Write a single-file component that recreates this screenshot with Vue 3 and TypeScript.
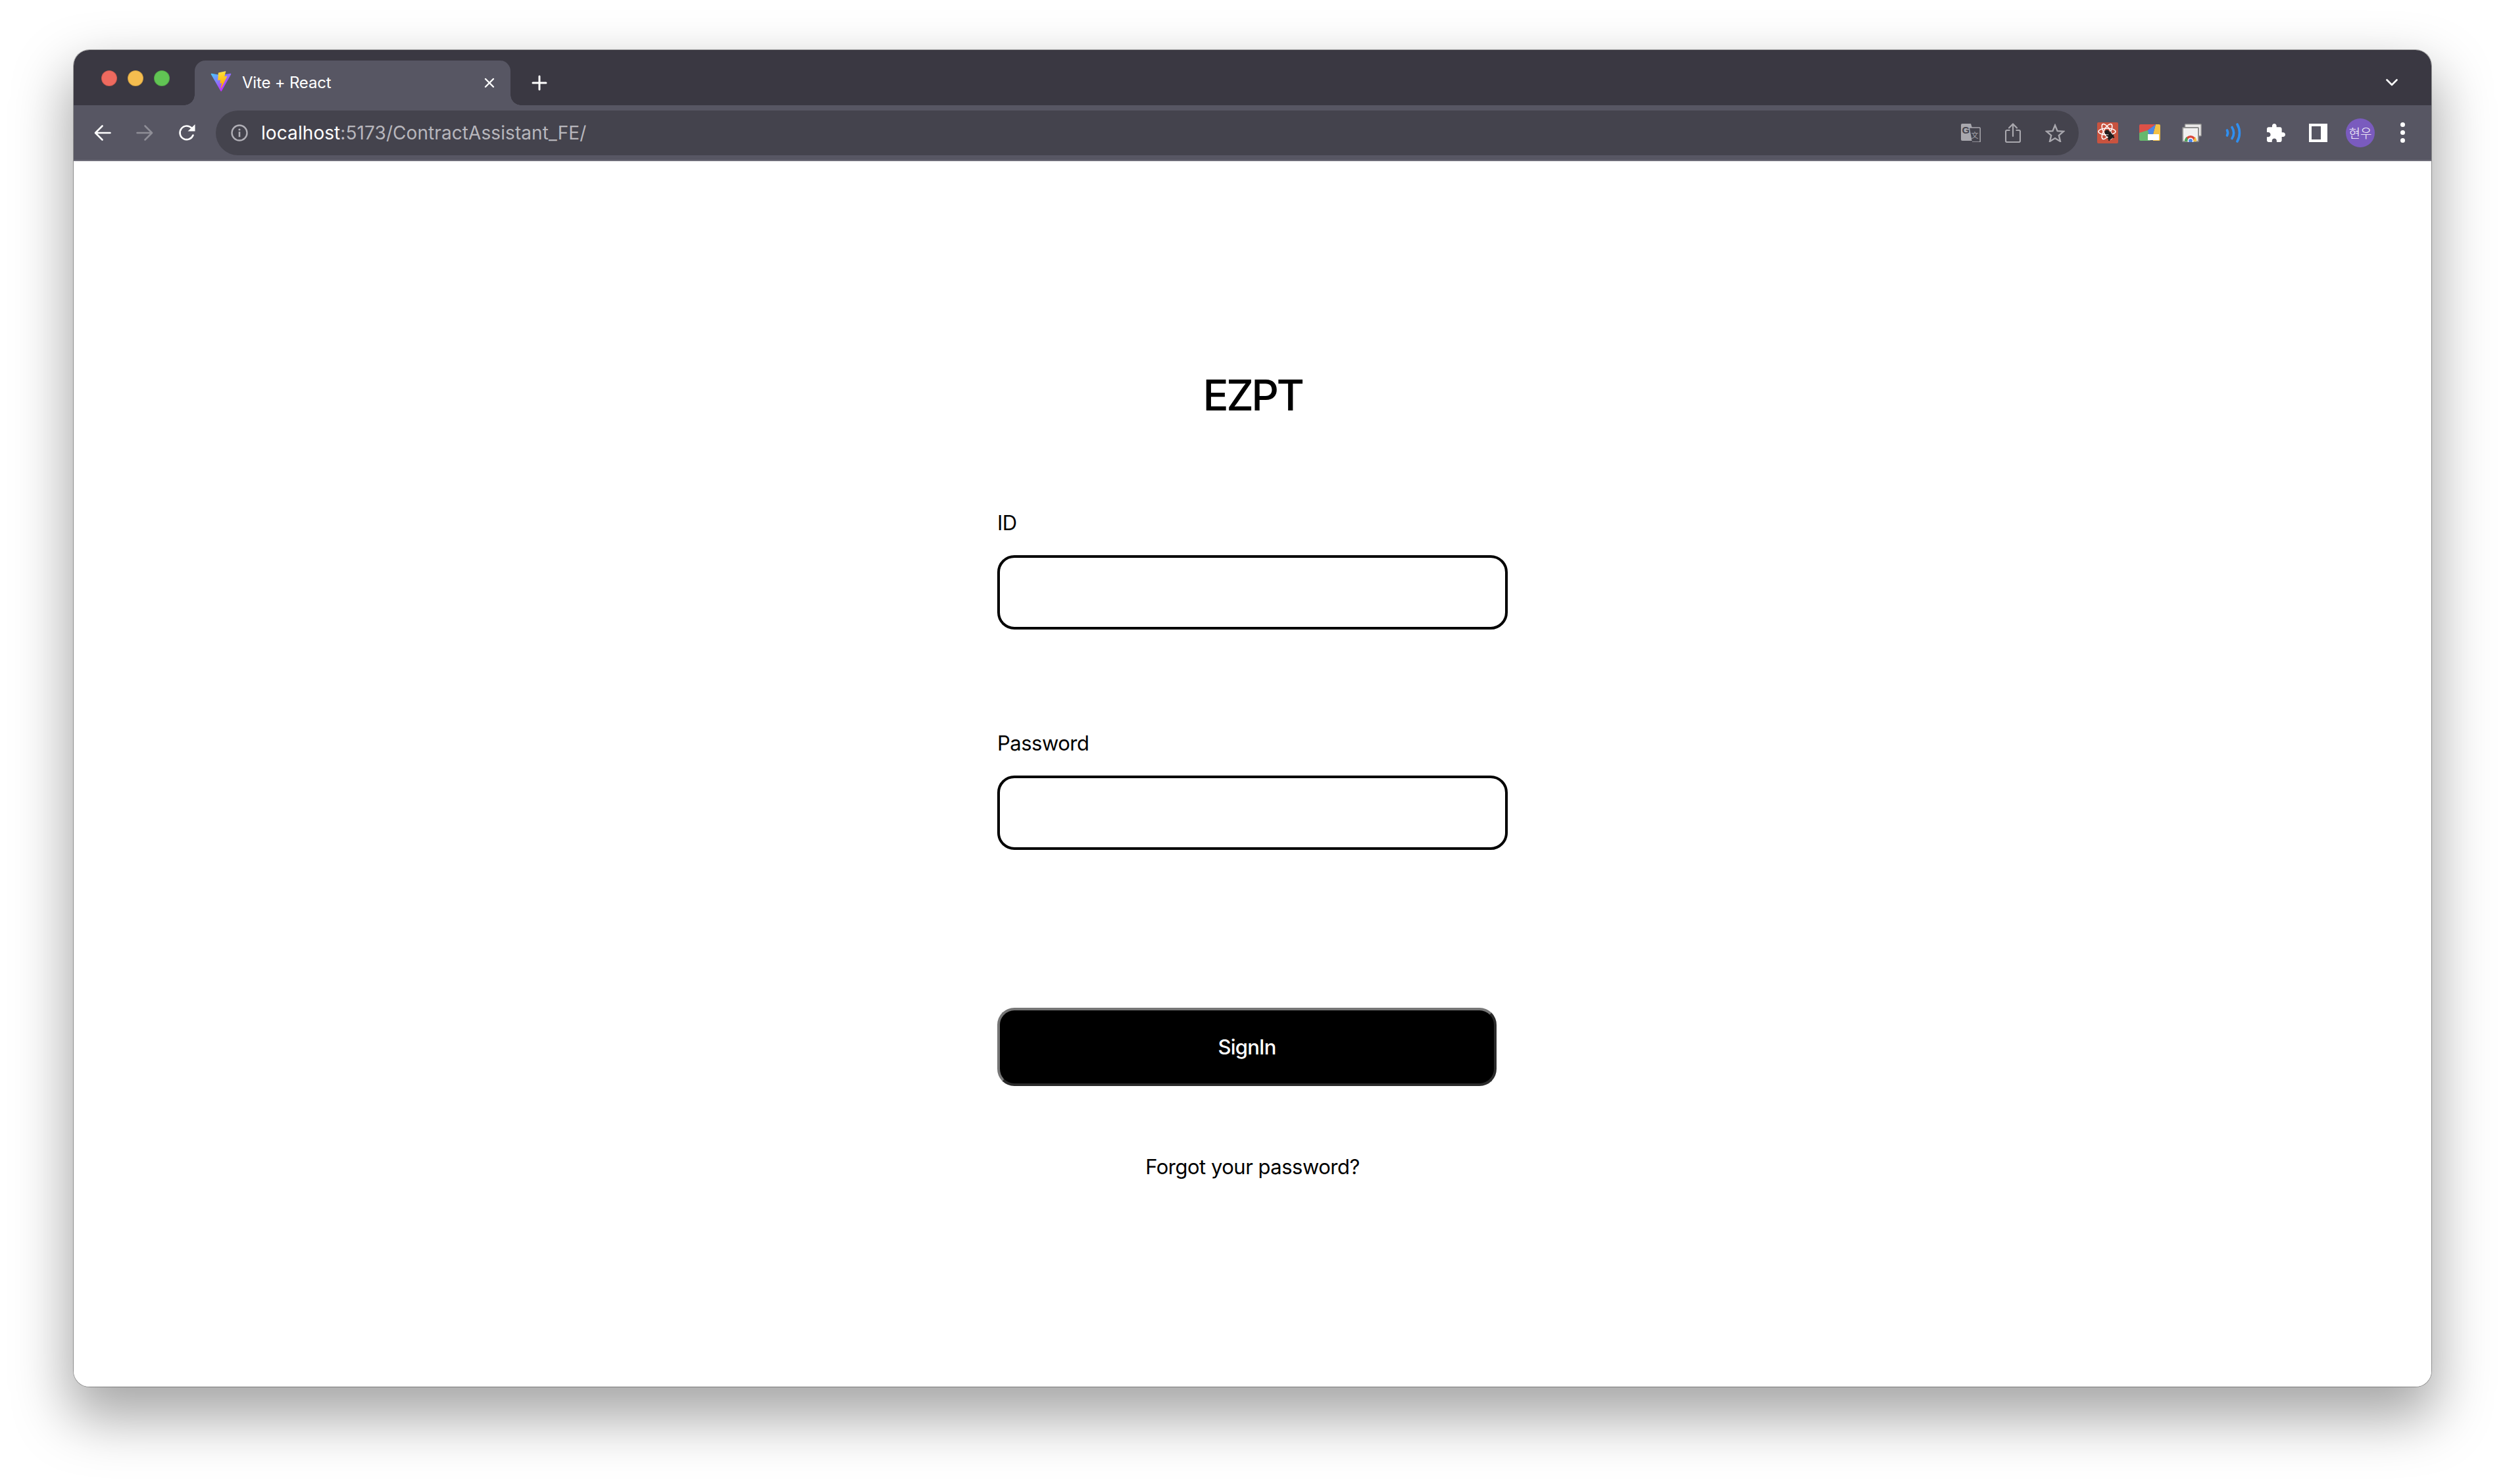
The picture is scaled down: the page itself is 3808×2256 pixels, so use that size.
<template>
  <div class="desktop">
    <div class="browser">
      <div class="tab-strip">
        <div class="lights">
          <span class="light red"></span>
          <span class="light yellow"></span>
          <span class="light green"></span>
        </div>
        <div class="tab">
          <svg class="favicon" viewBox="0 0 410 404">
            <defs>
              <linearGradient id="viteA" x1="6" y1="33" x2="235" y2="344" gradientUnits="userSpaceOnUse">
                <stop offset="0" stop-color="#41D1FF" />
                <stop offset="1" stop-color="#BD34FE" />
              </linearGradient>
              <linearGradient id="viteB" x1="194" y1="8" x2="236" y2="292" gradientUnits="userSpaceOnUse">
                <stop offset="0" stop-color="#FFEA83" />
                <stop offset="0.08" stop-color="#FFDD35" />
                <stop offset="1" stop-color="#FFA800" />
              </linearGradient>
            </defs>
            <path fill="url(#viteA)" d="M399.641 59.5246L215.643 388.545C211.844 395.338 202.084 395.378 198.228 388.618L10.5817 59.5563C6.38087 52.1896 12.6802 43.2665 21.0281 44.7586L205.223 77.6824C206.398 77.8924 207.601 77.8904 208.776 77.6763L389.119 44.8058C397.439 43.2894 403.768 52.1434 399.641 59.5246Z" />
            <path fill="url(#viteB)" d="M292.965 1.5744L156.801 28.2552C154.563 28.6937 152.906 30.5903 152.771 32.8664L144.395 174.33C144.198 177.662 147.258 180.248 150.51 179.498L188.42 170.749C191.967 169.931 195.172 173.055 194.443 176.622L183.18 231.775C182.422 235.487 185.907 238.661 189.532 237.56L212.947 230.446C216.577 229.344 220.065 232.527 219.297 236.242L201.398 322.875C200.278 328.294 207.486 331.249 210.492 326.603L212.5 323.5L323.454 102.072C325.312 98.3645 322.108 94.137 318.036 94.9228L279.014 102.454C275.347 103.161 272.227 99.746 273.262 96.1583L298.731 7.86689C299.767 4.27314 296.636 0.855181 292.965 1.5744Z" />
          </svg>
          <span class="tab-title">Vite + React</span>
          <svg class="tab-close" viewBox="0 0 16 16">
            <path d="M2 2l12 12M14 2L2 14" stroke="#fff" stroke-width="2.4" stroke-linecap="round" fill="none" />
          </svg>
        </div>
        <svg class="new-tab" viewBox="0 0 24 24">
          <path d="M12 2v20M2 12h20" stroke="#fff" stroke-width="3" stroke-linecap="round" fill="none" />
        </svg>
        <svg class="tab-list" viewBox="0 0 18 11">
          <path d="M1.5 1.5L9 9l7.5-7.5" stroke="#fff" stroke-width="2.6" stroke-linecap="round" stroke-linejoin="round" fill="none" />
        </svg>
      </div>

      <div class="toolbar">
        <div class="slot">
          <svg class="nav" viewBox="0 0 26 26">
            <path d="M24.5 13H2.5M12.5 2.5L2 13l10.5 10.5" stroke="#fff" stroke-width="2.6" stroke-linecap="round" stroke-linejoin="round" fill="none" />
          </svg>
        </div>
        <div class="slot">
          <svg class="nav" viewBox="0 0 26 26">
            <path d="M1.5 13h22M13.5 2.5L24 13 13.5 23.5" stroke="#8f8e97" stroke-width="2.6" stroke-linecap="round" stroke-linejoin="round" fill="none" />
          </svg>
        </div>
        <div class="slot">
          <svg class="nav" viewBox="0 0 26 26">
            <path d="M22.5 16.5A10.3 10.3 0 1 1 20.3 5.7" stroke="#fff" stroke-width="2.6" stroke-linecap="round" fill="none" />
            <path d="M14.5 10.5h11V0z" fill="#fff" />
          </svg>
        </div>

        <div class="omnibox">
          <svg class="info" viewBox="0 0 26 26">
            <circle cx="13" cy="13" r="11.5" stroke="#b0afb6" stroke-width="2.4" fill="none" />
            <circle cx="13" cy="8" r="1.6" fill="#b0afb6" />
            <rect x="11.7" y="11.2" width="2.6" height="8" fill="#b0afb6" />
          </svg>
          <div class="url"><span class="host">localhost</span>:5173/ContractAssistant_FE/</div>
          <div class="slot">
            <svg class="translate" viewBox="0 0 30 28">
              <path d="M2 0h13l8 26H2a2 2 0 0 1-2-2V2a2 2 0 0 1 2-2z" fill="#a9a8ae" />
              <path d="M13 6h15a1.2 1.2 0 0 1 1.2 1.2v19.600A1.2 1.2 0 0 1 28 28H17" fill="#44434d" stroke="#a9a8ae" stroke-width="1.5" />
              <text x="1.5" y="15" class="translate-g">G</text>
              <text x="15.5" y="22" class="translate-k">文</text>
            </svg>
          </div>
          <div class="slot">
            <svg class="share" viewBox="0 0 24 30">
              <path d="M7.5 11H3a2 2 0 0 0-2 2v14a2 2 0 0 0 2 2h18a2 2 0 0 0 2-2V13a2 2 0 0 0-2-2h-4.5" stroke="#a9a8ae" stroke-width="2.2" fill="none" />
              <path d="M12 20V2M6 7.5L12 1.5l6 6" stroke="#a9a8ae" stroke-width="2.2" stroke-linecap="round" fill="none" />
            </svg>
          </div>
          <div class="slot">
            <svg class="star" viewBox="0 0 30 28">
              <path d="M15 2.5l3.6 8.6 9.3.7-7.1 6.1 2.2 9.1-8-4.9-8 4.9 2.2-9.1-7.1-6.1 9.3-.7z" stroke="#a9a8ae" stroke-width="2.4" stroke-linejoin="miter" fill="none" />
            </svg>
          </div>
        </div>

        <div class="slot">
          <svg class="ext-react" viewBox="0 0 32 32">
            <rect width="32" height="32" rx="2" fill="#c9533f" />
            <g stroke="#fff" stroke-width="1.5" fill="none">
              <ellipse cx="15" cy="14" rx="13" ry="5" />
              <ellipse cx="15" cy="14" rx="13" ry="5" transform="rotate(60 15 14)" />
              <ellipse cx="15" cy="14" rx="13" ry="5" transform="rotate(120 15 14)" />
            </g>
            <circle cx="15" cy="15" r="3.5" fill="#1d1d1d" />
            <g stroke="#1d1d1d" stroke-width="2" fill="none">
              <path d="M20 14l-2 14M14 20l12 3M16 25l9-6M16 15l9 7" />
            </g>
            <ellipse cx="20" cy="21" rx="3.5" ry="5" fill="#1d1d1d" />
          </svg>
        </div>
        <div class="slot">
          <svg class="ext-color" viewBox="0 0 32 25">
            <path d="M2 0h23L13 9 0 15V2a2 2 0 0 1 2-2z" fill="#dd5147" />
            <path d="M25 0h5a2 2 0 0 1 2 2v13H21z" fill="#f4c145" />
            <path d="M13 9l12-9-4 15H13z" fill="#4e88e6" />
            <path d="M0 13l13-4 4 16H2a2 2 0 0 1-2-2z" fill="#66b86e" />
            <path d="M21 15h11v8a2 2 0 0 1-2 2h-9z" fill="#f4c145" />
            <rect x="13" y="15" width="17" height="9" fill="#fff" />
          </svg>
        </div>
        <div class="slot">
          <svg class="ext-chrome" viewBox="0 0 30 28">
            <rect x="4.5" y="0.8" width="24.7" height="18" rx="1" fill="#eceaea" stroke="#8e8e8e" stroke-width="1.5" />
            <rect x="1" y="6" width="24" height="21" rx="1" fill="#f1f0f0" stroke="#8e8e8e" stroke-width="2" />
            <path d="M4 27a9 9 0 0 1 18 0z" fill="#d9473a" />
            <path d="M4 27a9 9 0 0 1 3-7l3 7z" fill="#4aa35a" />
            <path d="M17 27l3-7a9 9 0 0 1 2 7z" fill="#f2c23f" />
            <circle cx="13" cy="26" r="4.5" fill="#fff" />
            <circle cx="13" cy="26" r="3" fill="#4b86e8" />
          </svg>
        </div>
        <div class="slot">
          <svg class="ext-wave" viewBox="0 0 26 30">
            <g stroke="#2f8ff0" stroke-width="3.6" stroke-linecap="round" fill="none">
              <path d="M2.5 11a8 8 0 0 1 0 8" />
              <path d="M10 6.5a16 16 0 0 1 0 17" />
              <path d="M18 2a26 26 0 0 1 0 26" />
            </g>
          </svg>
        </div>
        <div class="slot">
          <svg class="puzzle" viewBox="2 1 21 21">
            <path fill="#fff" d="M20.5 11H19V7c0-1.1-.9-2-2-2h-4V3.5C13 2.12 11.88 1 10.5 1S8 2.12 8 3.5V5H4c-1.1 0-1.99.9-1.99 2v3.8H3.5c1.49 0 2.7 1.21 2.7 2.7s-1.21 2.7-2.7 2.7H2V20c0 1.1.9 2 2 2h3.8v-1.5c0-1.49 1.21-2.7 2.7-2.7 1.49 0 2.7 1.21 2.7 2.7V22H17c1.1 0 2-.9 2-2v-4h1.5c1.38 0 2.5-1.12 2.5-2.5S21.88 11 20.5 11z" />
          </svg>
        </div>
        <div class="slot">
          <div class="side-panel"></div>
        </div>
        <div class="slot">
          <div class="avatar">현우</div>
        </div>
        <div class="slot">
          <div class="menu-dots"><i></i><i></i><i></i></div>
        </div>
      </div>
      <div class="toolbar-line"></div>

      <main class="page">
        <h1 class="title">EZPT</h1>
        <form class="form" @submit.prevent>
          <label class="label" for="user-id">ID</label>
          <input id="user-id" class="field" type="text" />
          <label class="label second" for="user-password">Password</label>
          <input id="user-password" class="field" type="password" />
          <button class="submit" type="submit">SignIn</button>
          <div class="forgot">Forgot your password?</div>
        </form>
      </main>
    </div>
  </div>
</template>

<script setup lang="ts">
</script>

<style>
html,
body {
  margin: 0;
  background: #fff;
}
</style>

<style scoped>
.desktop {
  width: 3808px;
  height: 2256px;
  box-sizing: border-box;
  padding: 76px 112px 148px;
  background: #fff;
  overflow: hidden;
  font-family: Inter, "Noto Sans CJK KR", sans-serif;
}
.browser {
  height: 100%;
  display: flex;
  flex-direction: column;
  border-radius: 24px;
  background: #fff;
  box-shadow: 0 0 0 1px rgba(0, 0, 0, 0.3), 0 40px 84px 8px rgba(0, 0, 0, 0.35);
}
.tab-strip {
  height: 84px;
  flex: none;
  display: flex;
  align-items: flex-start;
  background: #3a3842;
  border-radius: 24px 24px 0 0;
}
.lights {
  width: 184px;
  height: 84px;
  flex: none;
  box-sizing: border-box;
  padding: 31px 0 0 42px;
  display: flex;
  gap: 16px;
}
.light {
  width: 24px;
  height: 24px;
  border-radius: 50%;
  box-sizing: border-box;
  border: 1px solid rgba(0, 0, 0, 0.15);
}
.red {
  background: #ee6a5f;
}
.yellow {
  background: #f5bd4f;
}
.green {
  background: #61c454;
}
.tab {
  position: relative;
  width: 480px;
  height: 68px;
  margin-top: 16px;
  flex: none;
  box-sizing: border-box;
  padding: 0 24px;
  display: flex;
  align-items: center;
  background: #575663;
  border-radius: 16px 16px 0 0;
}
.tab::before,
.tab::after {
  content: "";
  position: absolute;
  bottom: 0;
  width: 16px;
  height: 16px;
  background: radial-gradient(circle at 0 0, #3a3842 15.5px, #575663 16px);
}
.tab::before {
  left: -16px;
}
.tab::after {
  right: -16px;
  transform: scaleX(-1);
}
.favicon {
  width: 32px;
  height: 32px;
  flex: none;
  margin-bottom: 4px;
}
.tab-title {
  margin-left: 16px;
  flex: 1;
  color: #fff;
  font-size: 24px;
  line-height: 32px;
  letter-spacing: -0.2px;
}
.tab-close {
  width: 16px;
  height: 16px;
  flex: none;
}
.new-tab {
  width: 24px;
  height: 24px;
  flex: none;
  margin: 38px 0 0 32px;
}
.tab-list {
  width: 18px;
  height: 11px;
  flex: none;
  margin: 44px 51px 0 auto;
}
.toolbar {
  height: 83px;
  flex: none;
  box-sizing: border-box;
  padding: 0 12px;
  display: flex;
  align-items: center;
  background: #575663;
}
.toolbar-line {
  height: 2px;
  flex: none;
  background: #6e6d79;
}
.slot {
  width: 64px;
  height: 64px;
  flex: none;
  display: flex;
  align-items: center;
  justify-content: center;
}
.nav {
  width: 26px;
  height: 26px;
}
.omnibox {
  flex: 1;
  height: 68px;
  margin: 0 12px;
  box-sizing: border-box;
  padding: 0 4px 0 23px;
  display: flex;
  align-items: center;
  background: #44434d;
  border-radius: 34px;
}
.info {
  width: 26px;
  height: 26px;
  flex: none;
}
.url {
  flex: 1;
  margin-left: 20px;
  color: #b7b6bc;
  font-size: 28px;
  line-height: 36px;
  letter-spacing: 0.08px;
  white-space: nowrap;
}
.host {
  color: #fff;
}
.translate {
  width: 30px;
  height: 28px;
}
.translate-g {
  fill: #44434d;
  font: 700 15px "Liberation Sans", sans-serif;
}
.translate-k {
  fill: #a9a8ae;
  font: 11px "Noto Sans CJK SC", sans-serif;
}
.share {
  width: 24px;
  height: 30px;
}
.star {
  width: 30px;
  height: 28px;
}
.ext-react {
  width: 32px;
  height: 32px;
}
.ext-color {
  width: 32px;
  height: 25px;
}
.ext-chrome {
  width: 30px;
  height: 28px;
}
.ext-wave {
  width: 26px;
  height: 30px;
}
.puzzle {
  width: 28px;
  height: 28px;
}
.side-panel {
  width: 28px;
  height: 28px;
  box-sizing: border-box;
  border: 4px solid #fff;
  border-right-width: 10px;
  background: #575663;
}
.avatar {
  width: 44px;
  height: 44px;
  display: flex;
  align-items: center;
  justify-content: center;
  background: #7a5bbe;
  border-radius: 50%;
  color: #fff;
  font-family: "Noto Sans CJK KR", sans-serif;
  font-size: 19px;
  font-weight: 300;
}
.menu-dots {
  display: flex;
  flex-direction: column;
  gap: 5px;
}
.menu-dots i {
  display: block;
  width: 7px;
  height: 7px;
  background: #fff;
  border-radius: 50%;
}
.page {
  flex: 1;
  display: flex;
  flex-direction: column;
  align-items: center;
  background: #fff;
  border-radius: 0 0 24px 24px;
}
.title {
  margin: 316px 0 0;
  color: #000;
  font-size: 65px;
  line-height: 80px;
  font-weight: 500;
  letter-spacing: -3.5px;
}
.form {
  width: 776px;
  display: flex;
  flex-direction: column;
  margin-top: 134px;
}
.label {
  color: #000;
  font-size: 31px;
  line-height: 40px;
  letter-spacing: -0.5px;
}
.field {
  width: 776px;
  height: 113px;
  box-sizing: border-box;
  margin-top: 29px;
  background: #fff;
  border: 4px solid #000;
  border-radius: 26px;
  outline: none;
}
.second {
  margin-top: 153px;
}
.submit {
  width: 759px;
  height: 119px;
  box-sizing: border-box;
  margin-top: 240px;
  color: #fff;
  background: #000;
  border: 4px solid;
  border-color: #767676 #2b2b2b #2b2b2b #767676;
  border-radius: 26px;
  font-family: inherit;
  font-size: 31px;
  font-weight: 500;
  letter-spacing: -0.8px;
}
.forgot {
  margin-top: 103px;
  color: #000;
  font-size: 31px;
  line-height: 40px;
  letter-spacing: -0.5px;
  text-align: center;
}
</style>
